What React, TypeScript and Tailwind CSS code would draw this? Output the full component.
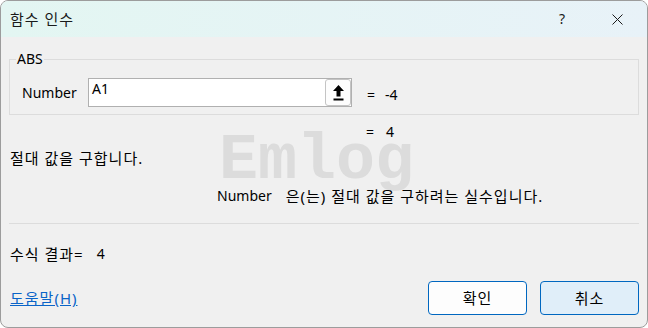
import React from 'react';

const font = { fontFamily: '"Noto Sans", "Noto Sans CJK KR", sans-serif' };

// Hangul in the source dialog renders wider than Noto CJK at 14px
const kr = 'text-[15px] tracking-[1px]';

const UploadArrow: React.FC = () => (
  <svg width="11" height="16" viewBox="0 0 11 16" fill="#000">
    <polygon points="5.5,0 11,6 7.5,6 7.5,11.5 3.5,11.5 3.5,6 0,6" />
    <rect x="0.5" y="13.5" width="10" height="2" />
  </svg>
);

export default function App() {
  return (
    <div
      className="relative w-[648px] h-[328px] overflow-hidden rounded-[8px] border border-[#9c9c9c] bg-[#f0f0f0] text-[14px] leading-[20px] text-black flex flex-col"
      style={font}
    >
      {/* Title bar */}
      <div className="h-[36px] shrink-0 flex items-center pl-[9px] bg-gradient-to-r from-[#e3f6f2] to-[#e8f2f8] text-[#1a1a1a]">
        <span className={kr}>함수 인수</span>
        <span className="ml-auto">?</span>
        <svg className="ml-[47px] mr-[24px]" width="11" height="11" viewBox="0 0 11 11" stroke="#1a1a1a" strokeWidth="1">
          <line x1="0.5" y1="0.5" x2="10.5" y2="10.5" />
          <line x1="10.5" y1="0.5" x2="0.5" y2="10.5" />
        </svg>
      </div>

      {/* Watermark */}
      <div
        className="absolute left-[218px] top-[128px] text-[65px] leading-[65px] font-bold text-[#dcdcdc] pointer-events-none select-none"
        style={{ fontFamily: '"Liberation Mono", monospace' }}
      >
        Emlog
      </div>

      <div className="relative px-[8px] flex flex-col">
        {/* Argument group */}
        <fieldset className="mt-[12px] border border-[#dcdcdc] pt-[9px] pb-[7px]">
          <legend className="ml-[6px] px-[1px]">ABS</legend>
          <div className="flex items-center pl-[12px]">
            <span className="w-[66px]">Number</span>
            <div className="w-[264px] h-[29px] border border-[#b0b0b0] bg-white flex items-start">
              <span className="pl-[3px] flex-1">A1</span>
              <div className="w-[26px] h-[27px] rounded-[3px] border border-[#c4c4c4] bg-[#fdfdfd] flex items-center justify-center">
                <UploadArrow />
              </div>
            </div>
            <span className="ml-[15px] mt-[4px]">=</span>
            <span className="ml-[10px] mt-[4px]">-4</span>
          </div>
        </fieldset>

        <div className="mt-[7px] pl-[357px] flex">
          <span>=</span>
          <span className="ml-[12px]">4</span>
        </div>

        <div className={`mt-[6px] pl-[1px] ${kr}`}>절대 값을 구합니다.</div>

        <div className="mt-[18px] pl-[208px] flex">
          <span>Number</span>
          <span className={`ml-[14px] ${kr}`}>은(는) 절대 값을 구하려는 실수입니다.</span>
        </div>

        <div className="mt-[17px] h-px bg-[#dcdcdc]" />

        <div className="mt-[20px] pl-[1px] flex">
          <span className={kr}>수식 결과=</span>
          <span className="ml-[13px]">4</span>
        </div>

        {/* Footer */}
        <div className="mt-[17px] flex items-center">
          <a className={`pl-[1px] text-[#0a64c8] underline cursor-pointer ${kr}`}>도움말(H)</a>
          <div className="ml-auto flex gap-[13px]">
            <button className={`w-[99px] h-[34px] rounded-[4px] border border-[#0067c0] bg-[#fdfdfd] ${kr}`}>확인</button>
            <button className={`w-[99px] h-[34px] rounded-[4px] border border-[#0067c0] bg-[#e0eef9] ${kr}`}>취소</button>
          </div>
        </div>
      </div>
    </div>
  );
}
